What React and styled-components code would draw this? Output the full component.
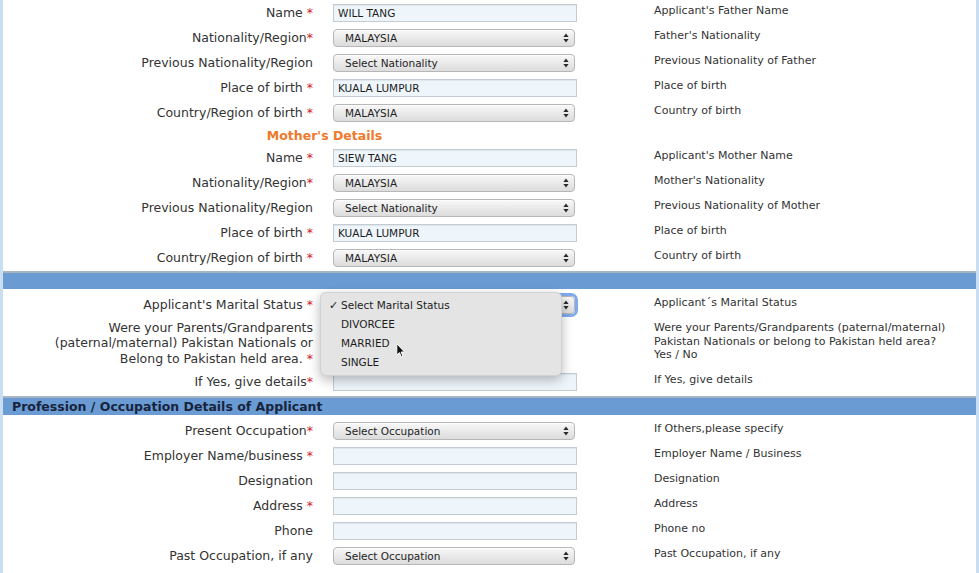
import React from 'react';
import styled, { createGlobalStyle } from 'styled-components';

const COLORS = {
  text: '#333',
  required: '#d0202a',
  orange: '#ee7a2c',
  bar: '#6b9bd3',
  barEdge: '#a6b5c4',
  frame: '#c9def3',
  inputBg: '#eef6fc',
  inputBorder: '#c4cbd2',
};

const GlobalStyle = createGlobalStyle`
  html, body {
    margin: 0;
    padding: 0;
    background: #fff;
  }
  body {
    font-family: "DejaVu Sans", Verdana, sans-serif;
    color: ${COLORS.text};
  }
`;

const FATHER_ROWS = [
  { label: 'Name', req: ' *', type: 'input', value: 'WILL TANG', help: "Applicant's Father Name" },
  { label: 'Nationality/Region', req: '*', type: 'select', value: 'MALAYSIA', help: "Father's Nationality" },
  { label: 'Previous Nationality/Region', type: 'select', value: 'Select Nationality', help: 'Previous Nationality of Father' },
  { label: 'Place of birth', req: ' *', type: 'input', value: 'KUALA LUMPUR', help: 'Place of birth' },
  { label: 'Country/Region of birth', req: ' *', type: 'select', value: 'MALAYSIA', help: 'Country of birth' },
];

const MOTHER_ROWS = [
  { label: 'Name', req: ' *', type: 'input', value: 'SIEW TANG', help: "Applicant's Mother Name" },
  { label: 'Nationality/Region', req: '*', type: 'select', value: 'MALAYSIA', help: "Mother's Nationality" },
  { label: 'Previous Nationality/Region', type: 'select', value: 'Select Nationality', help: 'Previous Nationality of Mother' },
  { label: 'Place of birth', req: ' *', type: 'input', value: 'KUALA LUMPUR', help: 'Place of birth' },
  { label: 'Country/Region of birth', req: ' *', type: 'select', value: 'MALAYSIA', help: 'Country of birth' },
];

const OCCUPATION_ROWS = [
  { label: 'Present Occupation', req: '*', type: 'select', value: 'Select Occupation', help: 'If Others,please specify' },
  { label: 'Employer Name/business', req: ' *', type: 'input', value: '', help: 'Employer Name / Business' },
  { label: 'Designation', type: 'input', value: '', help: 'Designation' },
  { label: 'Address', req: ' *', type: 'input', value: '', help: 'Address' },
  { label: 'Phone', type: 'input', value: '', help: 'Phone no' },
  { label: 'Past Occupation, if any', type: 'select', value: 'Select Occupation', help: 'Past Occupation, if any' },
];

const MARITAL_OPTIONS = ['Select Marital Status', 'DIVORCEE', 'MARRIED', 'SINGLE'];

const SelectArrows = () => (
  <svg width="6" height="10" viewBox="0 0 6 10">
    <path d="M3 0.5 L5.6 4 H0.4 Z" fill="#2a2a2a" />
    <path d="M3 9.5 L5.6 6 H0.4 Z" fill="#2a2a2a" />
  </svg>
);

const Pointer = () => (
  <svg width="10" height="15" viewBox="0 0 10 15">
    <path
      d="M0.8 0.8 L0.8 12 L3.4 9.6 L5.4 14 L7 13.3 L5.1 9 L8.6 9 Z"
      fill="#111"
      stroke="#fff"
      strokeWidth="1"
      strokeLinejoin="round"
    />
  </svg>
);

const Control = ({ type, value, focused }) =>
  type === 'select' ? (
    <SelectBox $focused={focused}>
      <span>{value}</span>
      <SelectArrows />
    </SelectBox>
  ) : (
    <TextInput defaultValue={value} readOnly />
  );

const FormRow = ({ label, req, type, value, help }) => (
  <Row>
    <Label>
      {label}
      {req && <Req>{req}</Req>}
    </Label>
    <Field>
      <Control type={type} value={value} />
    </Field>
    <Help>{help}</Help>
  </Row>
);

const App = () => {
  return (
    <Page>
      <GlobalStyle />

      {FATHER_ROWS.map((row, i) => (
        <FormRow key={`f-${i}`} {...row} />
      ))}

      <Row $height={20}>
        <SectionTitle>Mother's Details</SectionTitle>
      </Row>

      {MOTHER_ROWS.map((row, i) => (
        <FormRow key={`m-${i}`} {...row} />
      ))}

      <Bar $height={16} $top={1} />

      <Row>
        <Label>
          Applicant's Marital Status<Req> *</Req>
        </Label>
        <Field>
          {/* the open list covers the closed select's own caption */}
          <Control type="select" value="" focused />
          <Menu>
            {MARITAL_OPTIONS.map((opt, i) => (
              <MenuItem key={opt}>
                <Check>{i === 0 ? '✓' : ''}</Check>
                {opt}
              </MenuItem>
            ))}
            <PointerWrap>
              <Pointer />
            </PointerWrap>
          </Menu>
        </Field>
        <Help>Applicant´s Marital Status</Help>
      </Row>

      <Row $height={52}>
        <Label>
          Were your Parents/Grandparents
          <br />
          (paternal/maternal) Pakistan Nationals or
          <br />
          Belong to Pakistan held area.<Req> *</Req>
        </Label>
        <Field />
        <Help>
          Were your Parents/Grandparents (paternal/maternal)
          <br />
          Pakistan Nationals or belong to Pakistan held area?
          <br />
          Yes / No
        </Help>
      </Row>

      <FormRow label="If Yes, give details" req="*" type="input" value="" help="If Yes, give details" />

      <Bar $height={17} $top={2}>
        Profession / Occupation Details of Applicant
      </Bar>

      {OCCUPATION_ROWS.map((row, i) => (
        <FormRow key={`o-${i}`} {...row} />
      ))}
    </Page>
  );
};

const Page = styled.div`
  box-sizing: border-box;
  width: 979px;
  min-height: 573px;
  border-left: 3px solid ${COLORS.frame};
  border-right: 3px solid ${COLORS.frame};
  background: #fff;
`;

const Row = styled.div`
  display: grid;
  grid-template-columns: 330px 321px 1fr;
  height: ${p => p.$height || 25}px;
`;

const Label = styled.div`
  align-self: center;
  padding-right: 20px;
  text-align: right;
  font-size: 12.5px;
  line-height: 15.5px;
  color: ${COLORS.text};
  white-space: nowrap;
`;

const Req = styled.span`
  color: ${COLORS.required};
`;

const Field = styled.div`
  align-self: center;
  position: relative;
  height: 18px;
`;

const Help = styled.div`
  align-self: start;
  padding-top: 4px;
  font-size: 11px;
  line-height: 13.5px;
  color: ${COLORS.text};
  white-space: nowrap;
`;

const SectionTitle = styled.div`
  grid-column: 1 / 3;
  padding-right: 8px;
  text-align: center;
  font-size: 12.5px;
  line-height: 21px;
  font-weight: bold;
  color: ${COLORS.orange};
`;

const TextInput = styled.input`
  box-sizing: border-box;
  display: block;
  width: 244px;
  height: 18px;
  margin: 0;
  padding: 0 4px;
  border: 1px solid ${COLORS.inputBorder};
  background: ${COLORS.inputBg};
  box-shadow: inset 0 1px 1px rgba(0, 0, 0, 0.07);
  font-family: "DejaVu Sans", Verdana, sans-serif;
  font-size: 10.5px;
  color: #1c1c1c;
  outline: none;
`;

const SelectBox = styled.div`
  box-sizing: border-box;
  display: flex;
  align-items: center;
  justify-content: space-between;
  width: 242px;
  height: 18px;
  padding: 0 5px 0 11px;
  border: 1px solid #b7b7b7;
  border-radius: 4px;
  background: linear-gradient(#f8f8f8, #dcdcdc);
  font-size: 10.5px;
  color: #1e1e1e;
  box-shadow: ${p =>
    p.$focused ? '0 0 0 3px rgba(86, 142, 232, 0.75)' : 'inset 0 1px 0 rgba(255, 255, 255, 0.6)'};
`;

const Bar = styled.div`
  margin: ${p => p.$top}px 0 3px;
  height: ${p => p.$height}px;
  border-top: 2px solid ${COLORS.barEdge};
  background: ${COLORS.bar};
  padding-left: 9px;
  font-size: 12.5px;
  line-height: ${p => p.$height}px;
  font-weight: bold;
  color: #17243d;
`;

const Menu = styled.div`
  position: absolute;
  z-index: 5;
  left: -13px;
  top: -4px;
  width: 242px;
  box-sizing: border-box;
  padding: 3px 0;
  border-radius: 6px;
  background: #e4e4e4;
  border: 1px solid rgba(0, 0, 0, 0.08);
  box-shadow: 0 4px 12px rgba(0, 0, 0, 0.28);
`;

const MenuItem = styled.div`
  display: flex;
  align-items: center;
  height: 19px;
  padding-left: 8px;
  font-size: 10.5px;
  color: #1c1c1c;
`;

const Check = styled.span`
  display: inline-block;
  width: 12px;
  font-size: 11px;
`;

const PointerWrap = styled.div`
  position: absolute;
  left: 75px;
  top: 50px;
  line-height: 0;
`;

export default App;
